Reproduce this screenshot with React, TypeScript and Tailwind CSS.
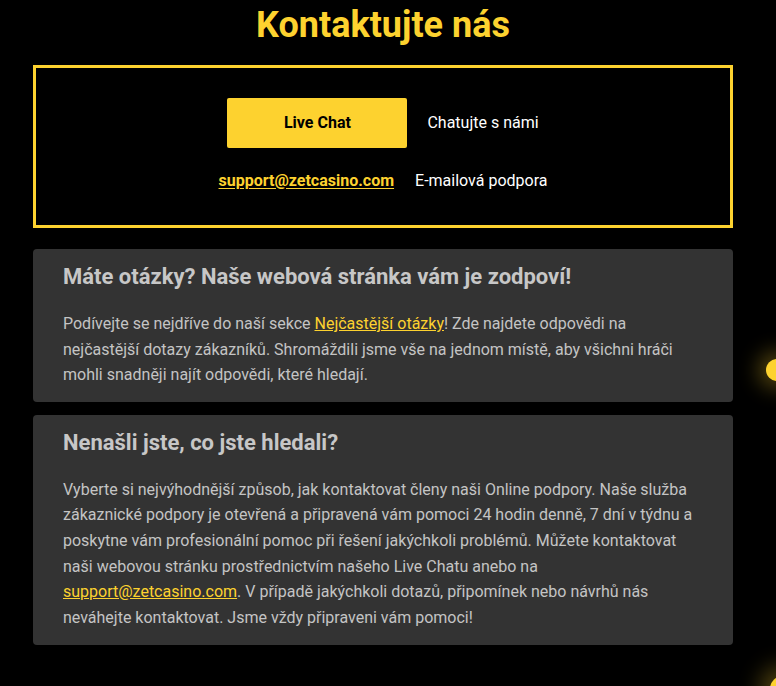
import React from "react";

export default function App() {
  return (
    <div
      className="relative min-h-[686px] w-full overflow-hidden bg-black"
      style={{ fontFamily: "Roboto, 'Noto Sans', sans-serif" }}
    >
      <div className="pointer-events-none absolute left-[766px] top-[359px] h-[22px] w-[22px] rounded-full bg-[#fdd22f] shadow-[0_0_20px_8px_rgba(253,210,47,0.3)]" />
      <div className="pointer-events-none absolute left-[770px] top-[676px] h-[26px] w-[26px] rounded-full bg-[#fdd22f] shadow-[0_0_22px_10px_rgba(253,210,47,0.3)]" />

      <div className="ml-[33px] flex w-[700px] flex-col pt-[4px]">
        <h1 className="text-center text-[36px] font-bold leading-[42px] text-[#fdd22f]">
          Kontaktujte nás
        </h1>

        <div className="mt-[19px] flex h-[163px] flex-col items-center border-[3px] border-[#fdd22f] pt-[30px]">
          <div className="flex items-center gap-[20px]">
            <button className="h-[50px] w-[180px] rounded-[2px] bg-[#fdd22f] text-[16px] font-bold text-black">
              Live Chat
            </button>
            <span className="text-[16px] text-white">Chatujte s námi</span>
          </div>
          <div className="mt-[21px] flex items-center gap-[21px] leading-[24px]">
            <a className="text-[16px] font-bold text-[#fdd22f] underline underline-offset-2">
              support@zetcasino.com
            </a>
            <span className="text-[16px] text-white">E-mailová podpora</span>
          </div>
        </div>

        <div className="mt-[21px] rounded-[4px] bg-[#333333] px-[30px] pb-[14px] pt-[15px]">
          <h2 className="text-[22px] font-bold leading-[26px] text-[#c7c7c7]">
            Máte otázky? Naše webová stránka vám je zodpoví!
          </h2>
          <p className="mt-[21px] text-[16px] leading-[25.6px] text-[#c4c4c4]">
            Podívejte se nejdříve do naší sekce{" "}
            <a className="text-[#fdd22f] underline">Nejčastější otázky</a>! Zde
            najdete odpovědi na nejčastější dotazy zákazníků. Shromáždili jsme vše
            na jednom místě, aby všichni hráči mohli snadněji najít odpovědi, které
            hledají.
          </p>
        </div>

        <div className="mt-[13px] rounded-[4px] bg-[#333333] px-[30px] pb-[15px] pt-[15px]">
          <h2 className="text-[22px] font-bold leading-[26px] text-[#c7c7c7]">
            Nenašli jste, co jste hledali?
          </h2>
          <p className="mt-[21px] text-[16px] leading-[25.6px] text-[#c4c4c4]">
            Vyberte si nejvýhodnější způsob, jak kontaktovat členy naši Online
            podpory. Naše služba zákaznické podpory je otevřená a připravená vám
            pomoci 24 hodin denně, 7 dní v týdnu a poskytne vám profesionální pomoc
            při řešení jakýchkoli problémů. Můžete kontaktovat naši webovou stránku
            prostřednictvím našeho Live Chatu anebo na
            <br />
            <a className="text-[#fdd22f] underline">support@zetcasino.com</a>. V
            případě jakýchkoli dotazů, připomínek nebo návrhů nás neváhejte
            kontaktovat. Jsme vždy připraveni vám pomoci!
          </p>
        </div>
      </div>
    </div>
  );
}
